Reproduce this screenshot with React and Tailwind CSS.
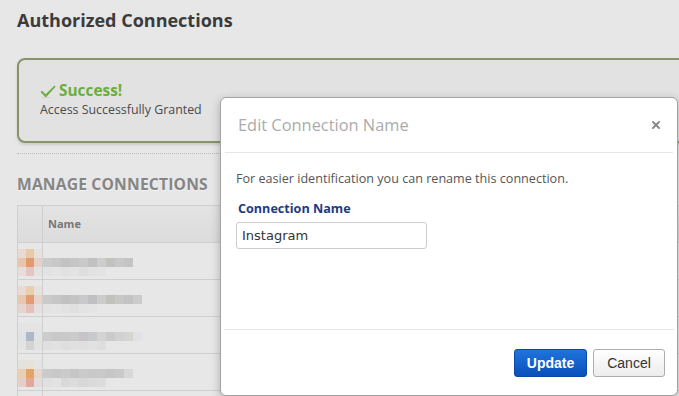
import { X } from "lucide-react";

const rows = [
  {
    icon: [
      ["#e9d9d1", "#e8cba6", "#e6e1dc"],
      ["#e7c6ad", "#e19a6e", "#e7d0c9"],
      ["#e6dddc", "#e5c5c1", "#e4e1e1"],
    ],
    bar: ["#cbcbcb", "#c7c7c7", "#c2c2c2", "#c5c5c5", "#c9c9c9", "#c1c0c3", "#cdcdcd", "#c3c2bf", "#c8c8c8", "#c4c4c5"],
    bar2: ["#e2e2e2", "#e4e4e4", "#e1e1e1", "#e3e3e3", "#dedede", "#e2e2e2", "#e3e3e3"],
  },
  {
    icon: [
      ["#e9dbd3", "#e8cfae", "#e6e1dd"],
      ["#e7c8ae", "#e29c72", "#e7d3cb"],
      ["#e6d4cf", "#e4c0b8", "#e4e0df"],
    ],
    bar: ["#cacaca", "#c6c6c6", "#c1c1c1", "#c4c4c4", "#c9c9c9", "#c0bfc2", "#cccccc", "#c2c1be", "#c7c7c7", "#c3c3c4", "#cbcbcb"],
    bar2: ["#e3e3e3", "#e4e4e4", "#e2e2e2", "#e0e0e0", "#e3e3e3", "#e4e4e4"],
  },
  {
    icon: [
      ["#e4e4e4", "#e6e4e2", "#e4e4e4"],
      ["#e0e2e6", "#aeb6c8", "#e2e3e5"],
      ["#e3e3e3", "#d3d3d3", "#e2e2e2"],
    ],
    bar: ["#cccccc", "#c8c8c8", "#c9c9c7", "#cbcbcb", "#c6c4c8", "#c7c9cb", "#d3d3d3", "#cbcbcb", "#d1d1d1", "#d6d5d2", "#e0e2e6"],
    bar2: ["#dfdfdf", "#e1e1e1", "#dedede", "#e0e0e0", "#dfdfdf", "#e1e1e1", "#dedede"],
  },
  {
    icon: [
      ["#e5e2de", "#e6e2da", "#e4e4e4"],
      ["#e8cfb4", "#e3a567", "#e6d6cd"],
      ["#e6cfcb", "#e2a899", "#e4dcda"],
    ],
    bar: ["#cbcbcb", "#c8c8c8", "#cbcbcb", "#c6c6c6", "#cacaca", "#c8c8c8", "#c9c9c9", "#c6c6c6", "#cacaca", "#d8d8d8"],
    bar2: ["#e0e0e0", "#e2e2e2", "#d9d9d9", "#dcdcdc", "#d7d7d7", "#dadada", "#dcdcdc"],
  },
];

function BlurRow({ row }) {
  return (
    <div className="flex h-[37px] border-b border-[#cfcfcf]">
      <div className="flex w-[25px] flex-col pt-[6px] border-r border-[#cfcfcf]">
        {row.icon.map((line, i) => (
          <div key={i} className="flex">
            {line.map((c, j) => (
              <div key={j} className="h-[9px] w-[9px]" style={{ background: c }} />
            ))}
          </div>
        ))}
      </div>
      <div className="flex flex-col pt-[15px]">
        <div className="flex">
          {row.bar.map((c, i) => (
            <div key={i} className="h-[9px] w-[9px]" style={{ background: c }} />
          ))}
        </div>
        <div className="flex">
          {row.bar2.map((c, i) => (
            <div key={i} className="h-[9px] w-[9px]" style={{ background: c }} />
          ))}
        </div>
      </div>
    </div>
  );
}

// tapered tick, thin on the left, heavier on the long stroke
function Tick() {
  return (
    <svg width="16" height="13" viewBox="0 0 16 13" className="mr-[3px]">
      <path d="M0.5 7 L2 5.8 L5.6 9.2 L14.6 0.6 L15.6 1.8 L5.8 12.4 Z" fill="#6cae3e" />
      <path d="M2 12.6 L10 12.6" stroke="#c9c9c9" strokeWidth="0.8" />
    </svg>
  );
}

export default function App() {
  return (
    <div className="relative h-[396px] w-[679px] overflow-hidden bg-[#e7e7e7] font-['Open_Sans',sans-serif]">
      {/* Page */}
      <div className="pl-[17px] pt-[5px]">
        <h1 className="text-[18px] font-bold leading-[30px] text-[#3b3b3b]">Authorized Connections</h1>

        <div className="mt-[23px] h-[85px] w-[720px] rounded-[8px] border-2 border-[#87946a] bg-[#e2e2e2] pl-[21px] pt-[22px] shadow-[0_2px_3px_rgba(0,0,0,0.12)]">
          <div className="flex items-center">
            <Tick />
            <span className="text-[15.4px] font-bold leading-[18px] text-[#6cae3e]">Success!</span>
          </div>
          <p className="mt-[1px] text-[12.4px] leading-[18px] text-[#4a4a4a]">Access Successfully Granted</p>
        </div>

        <div className="mt-[10px] w-[210px] border-t border-dotted border-[#b9b9b9]" />

        <h2 className="mt-[20px] text-[15.6px] font-bold leading-[20px] tracking-[0.2px] text-[#858585] [text-shadow:0_1px_0_#f4f4f4]">
          MANAGE CONNECTIONS
        </h2>

        <div className="mt-[11px] w-[680px] border-l border-t border-[#cfcfcf]">
          <div className="flex h-[37px] border-b border-[#cfcfcf] bg-gradient-to-b from-[#e3e3e3] to-[#dcdcdc]">
            <div className="w-[25px] border-r border-[#cfcfcf]" />
            <div className="flex items-center pl-[5px] text-[11px] font-bold text-[#777]">Name</div>
          </div>
          {rows.map((r, i) => (
            <BlurRow key={i} row={r} />
          ))}
          <div className="flex h-[37px]">
            <div className="w-[25px] border-r border-[#cfcfcf]" />
          </div>
        </div>
      </div>

      {/* Modal */}
      <div className="absolute left-[220px] top-[97px] flex h-[299px] w-[458px] flex-col rounded-[6px] border border-[#a3a3a3] bg-white shadow-[0_3px_10px_rgba(0,0,0,0.25)]">
        <div className="mx-[4px] flex h-[55px] items-center justify-between border-b border-[#e7e7e7] pl-[13px] pr-[11px]">
          <span className="text-[16.4px] text-[#ababab]">Edit Connection Name</span>
          <X size={12} strokeWidth={4} className="text-[#8a8a8a]" />
        </div>
        <div className="mx-[3px] flex-1 border-b border-[#e7e7e7] pl-[12px] pt-[17px]">
          <p className="text-[12.6px] leading-[18px] text-[#555]">For easier identification you can rename this connection.</p>
          <label className="mt-[12px] block pl-[2px] text-[12.6px] font-bold leading-[18px] text-[#1d3b84]">Connection Name</label>
          <input
            defaultValue="Instagram"
            className="mt-[4px] h-[27px] w-[191px] rounded-[3px] border border-[#cccccc] px-[5px] font-['DejaVu_Sans',sans-serif] text-[13px] text-[#333] outline-none"
          />
        </div>
        <div className="flex h-[65px] items-start justify-end gap-[6px] pr-[12px] pt-[19px] font-['Liberation_Sans',Arial,sans-serif]">
          <button className="h-[28px] w-[73px] rounded-[3px] border border-[#0b48a6] bg-gradient-to-b from-[#1f74dc] to-[#0a4fbb] text-[14px] font-bold text-white">
            Update
          </button>
          <button className="h-[28px] w-[72px] rounded-[3px] border border-[#adadad] bg-gradient-to-b from-white to-[#ececec] text-[14px] text-[#333]">
            Cancel
          </button>
        </div>
      </div>
    </div>
  );
}
